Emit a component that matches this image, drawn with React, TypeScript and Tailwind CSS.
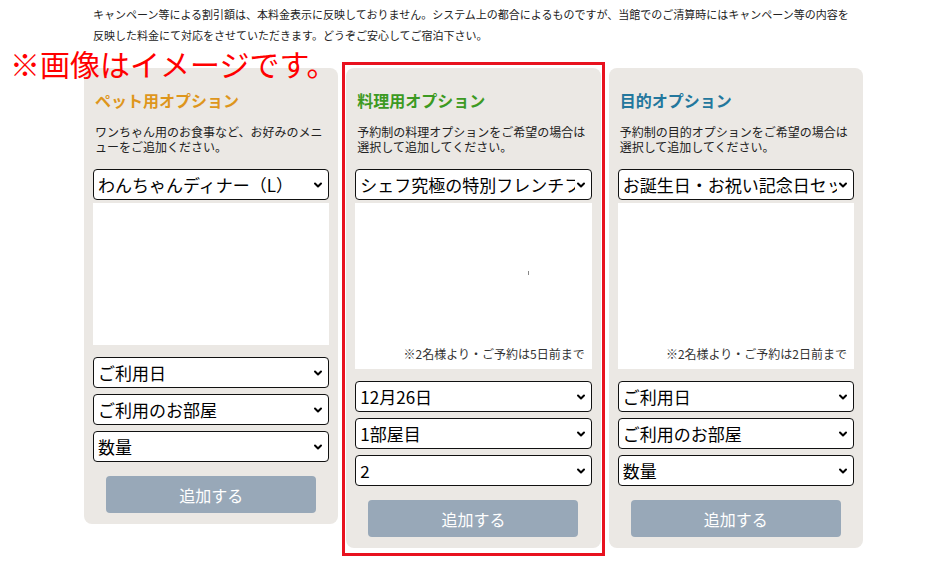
import { ChevronDown } from "lucide-react";

type Panel = {
  title: string;
  color: string;
  desc: string;
  first: string;
  note?: string;
  selects: string[];
  framed?: boolean;
};

const PANELS: Panel[] = [
  {
    title: "ペット用オプション",
    color: "text-[#de961c]",
    desc: "ワンちゃん用のお食事など、お好みのメニューをご追加ください。",
    first: "わんちゃんディナー（L）",
    selects: ["ご利用日", "ご利用のお部屋", "数量"],
  },
  {
    title: "料理用オプション",
    color: "text-[#3c9a22]",
    desc: "予約制の料理オプションをご希望の場合は選択して追加してください。",
    first: "シェフ究極の特別フレンチフルコース",
    note: "※2名様より・ご予約は5日前まで",
    selects: ["12月26日", "1部屋目", "2"],
    framed: true,
  },
  {
    title: "目的オプション",
    color: "text-[#23779d]",
    desc: "予約制の目的オプションをご希望の場合は選択して追加してください。",
    first: "お誕生日・お祝い記念日セット",
    note: "※2名様より・ご予約は2日前まで",
    selects: ["ご利用日", "ご利用のお部屋", "数量"],
  },
];

function FakeSelect({ value }: { value: string }) {
  return (
    <div className="relative h-[31px] w-full">
      <select
        defaultValue={value}
        className="h-full w-full appearance-none overflow-hidden rounded-[4px] border border-[#111] bg-white pl-[4px] pr-[16px] text-[17px] leading-[29px] text-black outline-none"
      >
        <option value={value}>{value}</option>
      </select>
      <ChevronDown
        className="pointer-events-none absolute right-[5px] top-[10px] h-[12px] w-[12px] bg-white text-black"
        strokeWidth={4}
      />
    </div>
  );
}

function OptionPanel({ p }: { p: Panel }) {
  return (
    <div className="relative">
      {p.framed && (
        <div className="pointer-events-none absolute -left-[4px] -top-[6px] -right-[4px] -bottom-[8px] border-[3px] border-[#e8121f]" />
      )}
      <div className="rounded-[8px] bg-[#ebe8e4] pl-[9px] pr-[9px] pt-[21px] pb-[11px]">
        <h2 className={`pl-[2px] text-[16px] font-bold leading-[22px] ${p.color}`}>{p.title}</h2>
        <p className="mt-[13px] pl-[2px] text-[12px] leading-[15px] text-[#222]">{p.desc}</p>
        <div className="mt-[15px]">
          <FakeSelect value={p.first} />
        </div>
        <div className="relative mt-[3px] bg-white">
          <div className="h-[142px]" />
          {p.framed && <div className="absolute left-[173px] top-[68px] h-[4px] w-px bg-[#888]" />}
          {p.note && (
            <div className="h-[24px] pr-[7px] text-right text-[12px] leading-[18px] text-[#333]">{p.note}</div>
          )}
        </div>
        <div className="mt-[12px] flex flex-col gap-[6px]">
          {p.selects.map((s) => (
            <FakeSelect key={s} value={s} />
          ))}
        </div>
        <div className="mt-[14px] flex justify-center">
          <button className="h-[37px] w-[210px] rounded-[4px] bg-[#98a8b8] text-[16px] text-white">追加する</button>
        </div>
      </div>
    </div>
  );
}

export default function App() {
  return (
    <div
      className="relative h-[576px] w-[935px] overflow-hidden bg-white"
      style={{ fontFamily: '"Noto Sans CJK JP", "Noto Sans", sans-serif' }}
    >
      <p className="ml-[93px] pt-[4px] text-[11px] leading-[21px] text-[#222]">
        キャンペーン等による割引額は、本料金表示に反映しておりません。システム上の都合によるものですが、当館でのご清算時にはキャンペーン等の内容を
        <br />
        反映した料金にて対応をさせていただきます。どうぞご安心してご宿泊下さい。
      </p>

      <div className="ml-[84px] mt-[22px] grid w-[779px] grid-cols-3 items-start gap-x-[8px]">
        {PANELS.map((p) => (
          <OptionPanel key={p.title} p={p} />
        ))}
      </div>

      <div className="absolute left-[10px] top-[48px] whitespace-nowrap text-[30px] leading-[30px] text-[#ff0000]">
        ※画像はイメージです。
      </div>
    </div>
  );
}
